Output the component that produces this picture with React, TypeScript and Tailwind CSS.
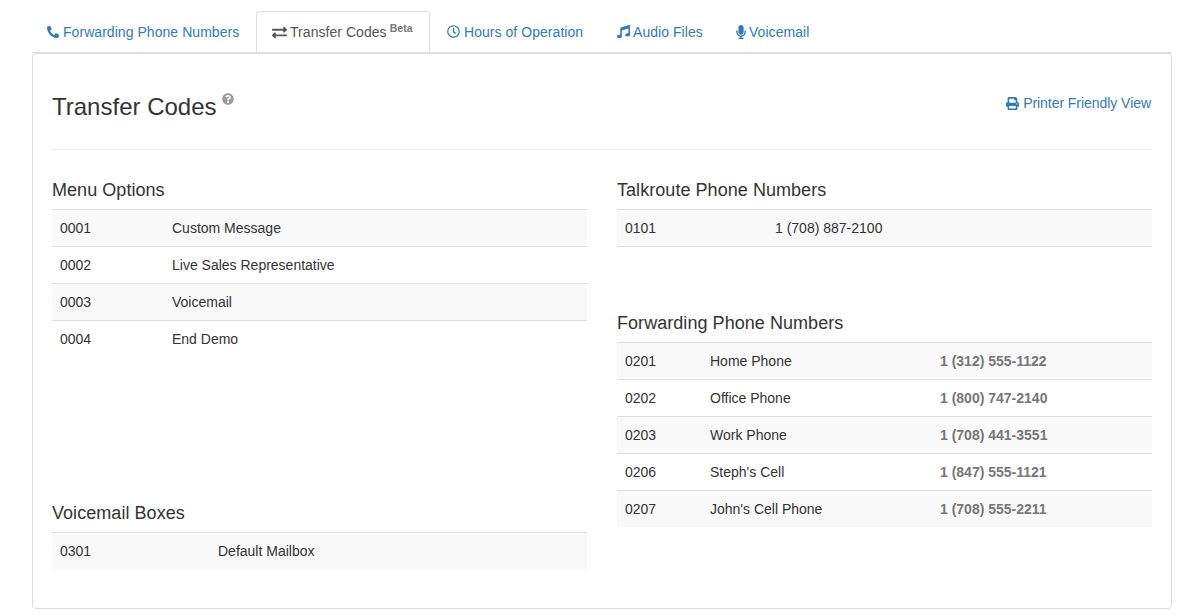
import React from "react";
import { FaPhone, FaExchangeAlt, FaRegClock, FaMusic, FaMicrophone, FaPrint, FaQuestionCircle } from "react-icons/fa";

type Tab = { label: string; icon: React.ReactNode; box: string; tab: string; active?: boolean; beta?: boolean };
const tabs: Tab[] = [
  { label: "Forwarding Phone Numbers", icon: <FaPhone className="text-[12px] -scale-x-100" />, box: "w-[16px]", tab: "w-[222px]" },
  { label: "Transfer Codes", icon: <FaExchangeAlt className="text-[15px]" />, box: "w-[18px]", tab: "w-[174px]", active: true, beta: true },
  { label: "Hours of Operation", icon: <FaRegClock className="text-[13px]" />, box: "w-[17px]", tab: "w-[166px]" },
  { label: "Audio Files", icon: <FaMusic className="ml-[2px] text-[13px]" />, box: "w-[18px]", tab: "w-[117px]" },
  { label: "Voicemail", icon: <FaMicrophone className="text-[14px]" />, box: "w-[15px]", tab: "w-[105px]" },
];

function Table({ rows, widths, last }: { rows: string[][]; widths: string[]; last?: boolean }) {
  return (
    <div className={last ? "border-b border-[#dddddd]" : ""}>
      {rows.map((r, i) => (
        <div
          key={r[0]}
          className={`flex h-[37px] items-center border-t border-[#dddddd] px-2 ${i % 2 === 0 ? "bg-[#f9f9f9]" : "bg-white"}`}
        >
          {r.map((c, j) => (
            <div key={j} className={`${widths[j]} ${j === 2 ? "font-bold text-[#777777]" : ""}`}>
              {c}
            </div>
          ))}
        </div>
      ))}
    </div>
  );
}

function Heading({ children }: { children: React.ReactNode }) {
  return <h4 className="mb-[9px] text-[18px] leading-[20px] font-medium tracking-[0.05px] text-[#333333]">{children}</h4>;
}

export default function App() {
  return (
    <div className="min-h-[616px] bg-white pl-8 pr-[29px] pt-[11px] pb-[7px] font-['Liberation_Sans',Arial,sans-serif] text-[14px] leading-5 text-[#333333]">
      <div className="flex h-[42px] border-b border-[#dddddd]">
        {tabs.map((t) => (
          <div
            key={t.label}
            className={
              t.active
                ? `${t.tab} mr-[2px] flex h-[41px] shrink-0 items-center rounded-t border border-b-0 border-[#dddddd] bg-white px-[15px] tracking-[0.05px] whitespace-nowrap text-[#555555]`
                : `${t.tab} mr-[2px] flex h-[41px] shrink-0 items-center px-[15px] tracking-[0.05px] whitespace-nowrap text-[#337ab7]`
            }
          >
            <span className={`${t.box} flex shrink-0 items-center`}>{t.icon}</span>
            <span>{t.label}</span>
            {t.beta && <sup className="ml-[3px] mt-[2px] text-[10.5px] font-bold text-[#777777]">Beta</sup>}
          </div>
        ))}
      </div>
      <div className="h-[556px] rounded border border-[#dddddd] px-[19px]">
        <div className="flex h-[96px] items-start justify-between border-b border-[#eeeeee]">
          <div className="mt-[39px] flex items-start">
            <h2 className="text-[24px] leading-[28px] font-medium text-[#333333]">Transfer Codes</h2>
            <FaQuestionCircle className="ml-[5px] mt-[0px] text-[12px] text-[#999999]" />
          </div>
          <div className="mt-[39px] mr-px flex items-center tracking-[-0.05px] text-[#337ab7]">
            <span className="flex w-[17px] shrink-0 items-center">
              <FaPrint className="text-[13px]" />
            </span>
            <span>Printer Friendly View</span>
          </div>
        </div>
        <div className="mt-[30px] grid grid-cols-2 gap-[30px]">
          <div>
            <Heading>Menu Options</Heading>
            <Table
              widths={["w-[112px]", ""]}
              rows={[
                ["0001", "Custom Message"],
                ["0002", "Live Sales Representative"],
                ["0003", "Voicemail"],
                ["0004", "End Demo"],
              ]}
            />
            <div className="mt-[146px]">
              <Heading>Voicemail Boxes</Heading>
              <Table widths={["w-[158px]", ""]} rows={[["0301", "Default Mailbox"]]} />
            </div>
          </div>
          <div>
            <Heading>Talkroute Phone Numbers</Heading>
            <Table widths={["w-[150px]", ""]} rows={[["0101", "1 (708) 887-2100"]]} last />
            <div className="mt-[66px]">
              <Heading>Forwarding Phone Numbers</Heading>
              <Table
                widths={["w-[85px]", "w-[230px]", ""]}
                rows={[
                  ["0201", "Home Phone", "1 (312) 555-1122"],
                  ["0202", "Office Phone", "1 (800) 747-2140"],
                  ["0203", "Work Phone", "1 (708) 441-3551"],
                  ["0206", "Steph's Cell", "1 (847) 555-1121"],
                  ["0207", "John's Cell Phone", "1 (708) 555-2211"],
                ]}
              />
            </div>
          </div>
        </div>
      </div>
    </div>
  );
}
